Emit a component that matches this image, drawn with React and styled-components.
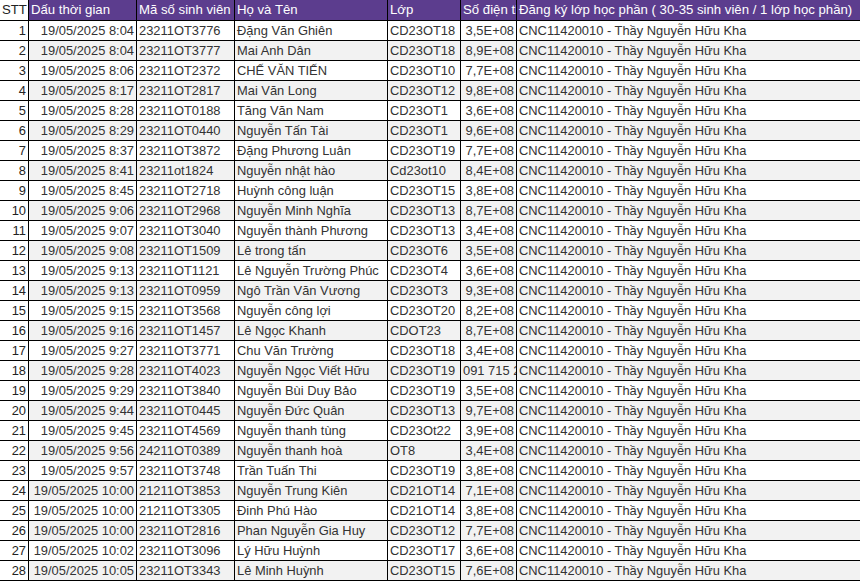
import React from "react";
import styled, { createGlobalStyle } from "styled-components";

const GlobalStyle = createGlobalStyle`
  html, body { margin: 0; padding: 0; background: #ffffff; overflow: hidden; }
  body { font-family: "Liberation Sans", Arial, sans-serif; }
`;

const COLS = "29px 108px 98px 153px 73px 56px 344px";

const Sheet = styled.div`
  display: flex;
  flex-direction: column;
  width: 860px;
  overflow: hidden;
  font-family: "Liberation Sans", Arial, sans-serif;
  font-size: 12.9px;
`;

const Row = styled.div`
  display: grid;
  grid-template-columns: ${COLS};
  height: ${(p) => (p.$header ? "21px" : "20px")};
  font-size: ${(p) => (p.$header ? "13.2px" : "12.9px")};
`;

const Cell = styled.div`
  box-sizing: border-box;
  border-right: 1px solid #000;
  border-bottom: 1px solid #000;
  padding: 0 2px 0 2px;
  line-height: ${(p) => (p.$header ? "20px" : "19px")};
  white-space: nowrap;
  overflow: hidden;
  text-align: ${(p) => (p.$right ? "right" : "left")};
  color: ${(p) => (p.$head ? "#ffffff" : "#333333")};
  background: ${(p) =>
    p.$head ? "#5c3d8e" : p.$shaded ? "#f2f2f2" : "#ffffff"};
  &:last-child { border-right: none; }
`;

const IndexCell = styled(Cell)`
  padding: 0 2px 0 2px;
  text-align: ${(p) => (p.$header ? "left" : "right")};
  color: #222;
  background: #ffffff;
`;

const rows = [
  ["19/05/2025 8:04", "23211OT3776", "Đặng Văn Ghiên", "CD23OT18", "3,5E+08"],
  ["19/05/2025 8:04", "23211OT3777", "Mai Anh Dân", "CD23OT18", "8,9E+08"],
  ["19/05/2025 8:06", "23211OT2372", "CHẾ VĂN TIẾN", "CD23OT10", "7,7E+08"],
  ["19/05/2025 8:17", "23211OT2817", "Mai Văn Long", "CD23OT12", "9,8E+08"],
  ["19/05/2025 8:28", "23211OT0188", "Tăng Văn Nam", "CD23OT1", "3,6E+08"],
  ["19/05/2025 8:29", "23211OT0440", "Nguyễn Tấn Tài", "CD23OT1", "9,6E+08"],
  ["19/05/2025 8:37", "23211OT3872", "Đặng Phương Luân", "CD23OT19", "7,7E+08"],
  ["19/05/2025 8:41", "23211ot1824", "Nguyễn nhật hào", "Cd23ot10", "8,4E+08"],
  ["19/05/2025 8:45", "23211OT2718", "Huỳnh công luận", "CD23OT15", "3,8E+08"],
  ["19/05/2025 9:06", "23211OT2968", "Nguyễn Minh Nghĩa", "CD23OT13", "8,7E+08"],
  ["19/05/2025 9:07", "23211OT3040", "Nguyễn thành Phương", "CD23OT13", "3,4E+08"],
  ["19/05/2025 9:08", "23211OT1509", "Lê trong tấn", "CD23OT6", "3,5E+08"],
  ["19/05/2025 9:13", "23211OT1121", "Lê Nguyễn Trường Phúc", "CD23OT4", "3,6E+08"],
  ["19/05/2025 9:13", "23211OT0959", "Ngô Trần Văn Vương", "CD23OT3", "9,3E+08"],
  ["19/05/2025 9:15", "23211OT3568", "Nguyễn công lợi", "CD23OT20", "8,2E+08"],
  ["19/05/2025 9:16", "23211OT1457", "Lê Ngọc Khanh", "CDOT23", "8,7E+08"],
  ["19/05/2025 9:27", "23211OT3771", "Chu Văn Trường", "CD23OT18", "3,4E+08"],
  ["19/05/2025 9:28", "23211OT4023", "Nguyễn Ngọc Viết Hữu", "CD23OT19", "091 715 260"],
  ["19/05/2025 9:29", "23211OT3840", "Nguyễn Bùi Duy Bảo", "CD23OT19", "3,5E+08"],
  ["19/05/2025 9:44", "23211OT0445", "Nguyễn Đức Quân", "CD23OT13", "9,7E+08"],
  ["19/05/2025 9:45", "23211OT4569", "Nguyễn thanh tùng", "CD23Ot22", "3,9E+08"],
  ["19/05/2025 9:56", "24211OT0389", "Nguyễn thanh hoà", "OT8", "3,4E+08"],
  ["19/05/2025 9:57", "23211OT3748", "Trần Tuấn Thi", "CD23OT19", "3,8E+08"],
  ["19/05/2025 10:00", "21211OT3853", "Nguyễn Trung Kiên", "CD21OT14", "7,1E+08"],
  ["19/05/2025 10:00", "21211OT3305", "Đinh Phú Hào", "CD21OT14", "3,8E+08"],
  ["19/05/2025 10:00", "23211OT2816", "Phan Nguyễn Gia Huy", "CD23OT12", "7,7E+08"],
  ["19/05/2025 10:02", "23211OT3096", "Lý Hữu Huỳnh", "CD23OT17", "3,6E+08"],
  ["19/05/2025 10:05", "23211OT3343", "Lê Minh Huỳnh", "CD23OT15", "7,6E+08"],
];

const COURSE = "CNC11420010 - Thầy Nguyễn Hữu Kha";

const headers = [
  "Dấu thời gian",
  "Mã số sinh viên",
  "Họ và Tên",
  "Lớp",
  "Số điện thoại",
  "Đăng ký lớp học phần ( 30-35 sinh viên / 1 lớp học phần)",
];

export default function App() {
  return (
    <>
      <GlobalStyle />
      <Sheet>
        <Row $header>
          <IndexCell $header>STT</IndexCell>
          {headers.map((h) => (
            <Cell key={h} $head $header>
              {h}
            </Cell>
          ))}
        </Row>
        {rows.map((r, i) => {
          const shaded = i % 2 === 1;
          const phoneIsNumber = /E\+/.test(r[4]);
          return (
            <Row key={i}>
              <IndexCell>{i + 1}</IndexCell>
              <Cell $shaded={shaded} $right>{r[0]}</Cell>
              <Cell $shaded={shaded}>{r[1]}</Cell>
              <Cell $shaded={shaded}>{r[2]}</Cell>
              <Cell $shaded={shaded}>{r[3]}</Cell>
              <Cell $shaded={shaded} $right={phoneIsNumber}>{r[4]}</Cell>
              <Cell $shaded={shaded}>{COURSE}</Cell>
            </Row>
          );
        })}
      </Sheet>
    </>
  );
}
